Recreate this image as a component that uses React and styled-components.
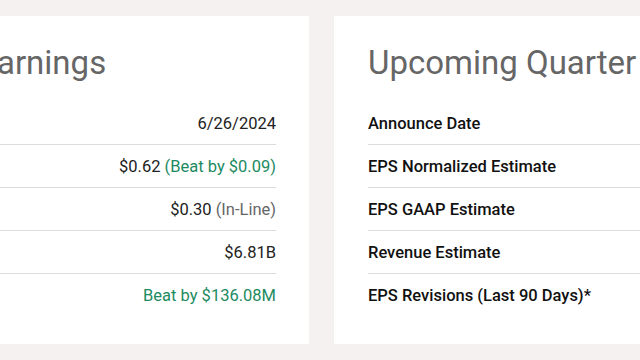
import styled, { createGlobalStyle } from "styled-components";

const GlobalStyle = createGlobalStyle`
  html, body {
    margin: 0;
    padding: 0;
    background: #f4f1f0;
    overflow: hidden;
  }
  body {
    font-family: Roboto, "Liberation Sans", sans-serif;
  }
`;

// the left card is cropped by the viewport, only its right part shows
const Page = styled.div`
  display: flex;
  gap: 25px;
  padding-top: 16px;
  margin-left: -246px;
  width: 1200px;
`;

const Card = styled.section`
  background: #fff;
  width: 555px;
  flex: none;
  box-sizing: border-box;
  padding: 28px 33px 28px 34px;
  height: 328px;
`;

const Title = styled.h2`
  margin: 0 0 20px;
  font-size: 33px;
  line-height: 38px;
  font-weight: 400;
  color: #666;
  white-space: nowrap;
`;

const Row = styled.div`
  display: flex;
  justify-content: space-between;
  align-items: center;
  height: 42px;
  border-bottom: 1px solid #dcdcdc;
  font-size: 16.5px;
  color: #222;
  white-space: nowrap;

  &:last-child {
    border-bottom: none;
  }
`;

const Label = styled.span`
  font-weight: 500;
  color: #111;
`;

const Value = styled.span`
  color: ${(p) => (p.$tone === "green" ? "#1d8a5f" : "#222")};
`;

const Note = styled.span`
  color: ${(p) => (p.$tone === "green" ? "#1d8a5f" : "#666")};
`;

const lastQuarter = [
  { label: "Announce Date", value: "6/26/2024" },
  { label: "EPS Normalized Actual", value: "$0.62", note: "(Beat by $0.09)", tone: "green" },
  { label: "EPS GAAP Actual", value: "$0.30", note: "(In-Line)" },
  { label: "Revenue Actual", value: "$6.81B" },
  { label: "Revenue Surprise", value: "Beat by $136.08M", valueTone: "green" },
];

const upcoming = [
  { label: "Announce Date", value: "" },
  { label: "EPS Normalized Estimate", value: "" },
  { label: "EPS GAAP Estimate", value: "" },
  { label: "Revenue Estimate", value: "" },
  { label: "EPS Revisions (Last 90 Days)*", value: "" },
];

const EarningsCard = ({ title, rows }) => (
  <Card>
    <Title>{title}</Title>
    {rows.map((r) => (
      <Row key={r.label}>
        <Label>{r.label}</Label>
        <Value $tone={r.valueTone}>
          {r.value}
          {r.note && <Note $tone={r.tone}> {r.note}</Note>}
        </Value>
      </Row>
    ))}
  </Card>
);

const App = () => (
  <>
    <GlobalStyle />
    <Page>
      <EarningsCard title="Last Quarter Earnings" rows={lastQuarter} />
      <EarningsCard title="Upcoming Quarter Earnings" rows={upcoming} />
    </Page>
  </>
);

export default App;
